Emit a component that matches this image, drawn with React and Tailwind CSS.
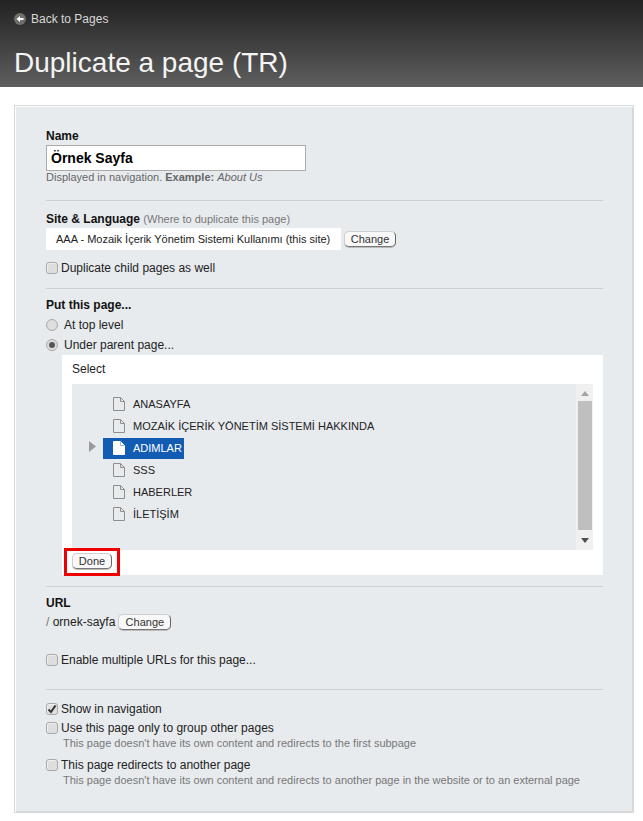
import React from 'react';

const treeItems = ['ANASAYFA', 'MOZAİK İÇERİK YÖNETİM SİSTEMİ HAKKINDA', 'ADIMLAR', 'SSS', 'HABERLER', 'İLETİŞİM'];

function PageIcon({ selected }) {
  return (
    <svg width="12" height="14" viewBox="0 0 12 14" className="shrink-0 -mt-[1px]">
      <path
        d="M0.5 0.5H7.5L11.5 4.5V13.5H0.5Z"
        fill={selected ? '#ffffff' : '#e8ebee'}
        stroke={selected ? '#ffffff' : '#8f8f8f'}
      />
      <path d="M7.5 0.5V4.5H11.5" fill="none" stroke={selected ? '#9db8d8' : '#8f8f8f'} />
    </svg>
  );
}

function Check({ checked }) {
  return (
    <span className="w-[12px] h-[12px] shrink-0 rounded-[3px] border border-[#a9a9a9] bg-[#dedede] shadow-[inset_1px_1px_0_#efefef] flex items-center justify-center">
      {checked && (
        <svg width="10" height="10" viewBox="0 0 10 10">
          <path d="M1.5 5.5L4 8L8.5 1.5" fill="none" stroke="#333" strokeWidth="2" />
        </svg>
      )}
    </span>
  );
}

function Radio({ checked }) {
  return (
    <span className="w-[12px] h-[12px] shrink-0 rounded-full border border-[#a9a9a9] bg-[#dedede] flex items-center justify-center">
      {checked && <span className="w-[6px] h-[6px] rounded-full bg-[#555]" />}
    </span>
  );
}

function Button({ children, className }) {
  return (
    <button className={`h-[16px] px-[6px] rounded-[5px] bg-[#f8f8f8] border border-[#cfcfcf] border-r-[#666] border-b-[#777] shadow-[0_1px_0_#bbb] text-[11px] leading-[14px] text-[#333] flex items-center justify-center ${className}`}>
      {children}
    </button>
  );
}

export default function App() {
  return (
    <div className="w-[643px] h-[821px] overflow-hidden bg-white text-[12px] text-[#222] font-['Liberation_Sans',Arial,sans-serif]">
      <div className="h-[87px] bg-gradient-to-b from-[#222222] to-[#5f5f5f] px-[14px] pt-[12px]">
        <div className="flex items-center gap-[5px] h-[14px] text-[12px] text-[#d8d8d8]">
          <svg width="12" height="12" viewBox="0 0 12 12">
            <circle cx="6" cy="6" r="6" fill="#6e6e6e" />
            <path d="M2.5 6L6 3V5H9.5V7H6V9Z" fill="#fff" />
          </svg>
          Back to Pages
        </div>
        <h1 className="mt-[21px] text-[28px] leading-[32px] text-[#f4f4f4]">Duplicate a page (TR)</h1>
      </div>

      <div className="mt-[18px] ml-[14px] w-[620px] h-[708px] border border-[#d8d8d8] shadow-[inset_1px_1px_0_#fff,inset_-1px_-1px_0_#d8d8d8] bg-[#e8ebee] pl-[31px] pr-[30px] pt-[23px]">
        <div className="font-bold leading-[14px] text-[#111]">Name</div>
        <div className="mt-[2px] w-[260px] h-[26px] border border-[#aaa] bg-white px-[4px] flex items-center text-[14px] font-bold text-black">
          Örnek Sayfa
        </div>
        <div className="mt-[0px] leading-[13px] text-[11px] text-[#666]">
          Displayed in navigation. <b>Example:</b> <i>About Us</i>
        </div>

        <div className="mt-[16px] border-t border-[#cfcfcf]" />

        <div className="mt-[11px] leading-[14px]">
          <b className="text-[#111]">Site &amp; Language</b>{' '}
          <span className="text-[11px] text-[#777]">(Where to duplicate this page)</span>
        </div>
        <div className="mt-[2px] flex items-center gap-[3px]">
          <div className="w-[295px] h-[22px] bg-white pl-[10px] flex items-center text-[11px] text-[#222]">
            AAA - Mozaik İçerik Yönetim Sistemi Kullanımı (this site)
          </div>
          <Button className="w-[52px]">Change</Button>
        </div>
        <label className="mt-[11px] flex items-center gap-[3px] h-[14px]">
          <Check />
          Duplicate child pages as well
        </label>

        <div className="mt-[13px] border-t border-[#cfcfcf]" />

        <div className="mt-[9px] font-bold leading-[14px] text-[#111]">Put this page...</div>
        <label className="mt-[6px] flex items-center gap-[6px] h-[14px]">
          <Radio />
          At top level
        </label>
        <label className="mt-[6px] flex items-center gap-[6px] h-[14px]">
          <Radio checked />
          Under parent page...
        </label>

        <div className="relative mt-[3px] ml-[16px] w-[541px] h-[220px] bg-white px-[10px] pt-[7px]">
          <div className="leading-[14px]">Select</div>
          <div className="mt-[8px] h-[166px] flex bg-[#e8ebee]">
            <div className="flex-1 pt-[9px]">
              {treeItems.map((item) => {
                const selected = item === 'ADIMLAR';
                return (
                  <div key={item} className="relative h-[22px] flex items-center pl-[31px] text-[11px] text-[#222]">
                    {selected && (
                      <svg width="7" height="11" viewBox="0 0 7 11" className="absolute left-[17px] top-[4px]">
                        <path d="M0 0L7 5.5L0 11Z" fill="#9a9a9a" />
                      </svg>
                    )}
                    <div className={`h-[21px] flex items-center gap-[8px] pl-[10px] pr-[2px] ${selected ? 'bg-[#125cb4] text-white' : ''}`}>
                      <PageIcon selected={selected} />
                      {item}
                    </div>
                  </div>
                );
              })}
            </div>
            <div className="w-[17px] bg-[#f0f0f0] flex flex-col items-center justify-between relative">
              <svg width="8" height="5" viewBox="0 0 8 5" className="mt-[7px]">
                <path d="M4 0L8 5H0Z" fill="#a3a3a3" />
              </svg>
              <div className="absolute left-[2px] right-[1px] top-[17px] h-[129px] bg-[#bfbfbf]" />
              <svg width="8" height="5" viewBox="0 0 8 5" className="mb-[7px]">
                <path d="M0 0H8L4 5Z" fill="#505050" />
              </svg>
            </div>
          </div>
          <Button className="mt-[3px] w-[40px]">Done</Button>
          <div className="absolute left-[2px] top-[193px] w-[56px] h-[28px] border-[3px] border-[#ee0000]" />
        </div>

        <div className="mt-[11px] border-t border-[#cfcfcf]" />

        <div className="mt-[9px] font-bold leading-[14px] text-[#111]">URL</div>
        <div className="mt-[3px] flex items-center gap-[3px] h-[17px]">
          <span><span className="text-[#777]">/</span> ornek-sayfa</span>
          <Button className="w-[53px]">Change</Button>
        </div>
        <label className="mt-[23px] flex items-center gap-[3px] h-[14px]">
          <Check />
          Enable multiple URLs for this page...
        </label>

        <div className="mt-[22px] border-t border-[#cfcfcf]" />

        <label className="mt-[12px] flex items-center gap-[3px] h-[14px]">
          <Check checked />
          Show in navigation
        </label>
        <label className="mt-[5px] flex items-center gap-[3px] h-[14px]">
          <Check />
          Use this page only to group other pages
        </label>
        <div className="mt-[1px] ml-[17px] text-[11px] leading-[14px] text-[#777]">
          This page doesn't have its own content and redirects to the first subpage
        </div>
        <label className="mt-[8px] flex items-center gap-[3px] h-[14px]">
          <Check />
          This page redirects to another page
        </label>
        <div className="mt-[1px] ml-[17px] text-[11px] leading-[14px] text-[#777]">
          This page doesn't have its own content and redirects to another page in the website or to an external page
        </div>
      </div>
    </div>
  );
}
